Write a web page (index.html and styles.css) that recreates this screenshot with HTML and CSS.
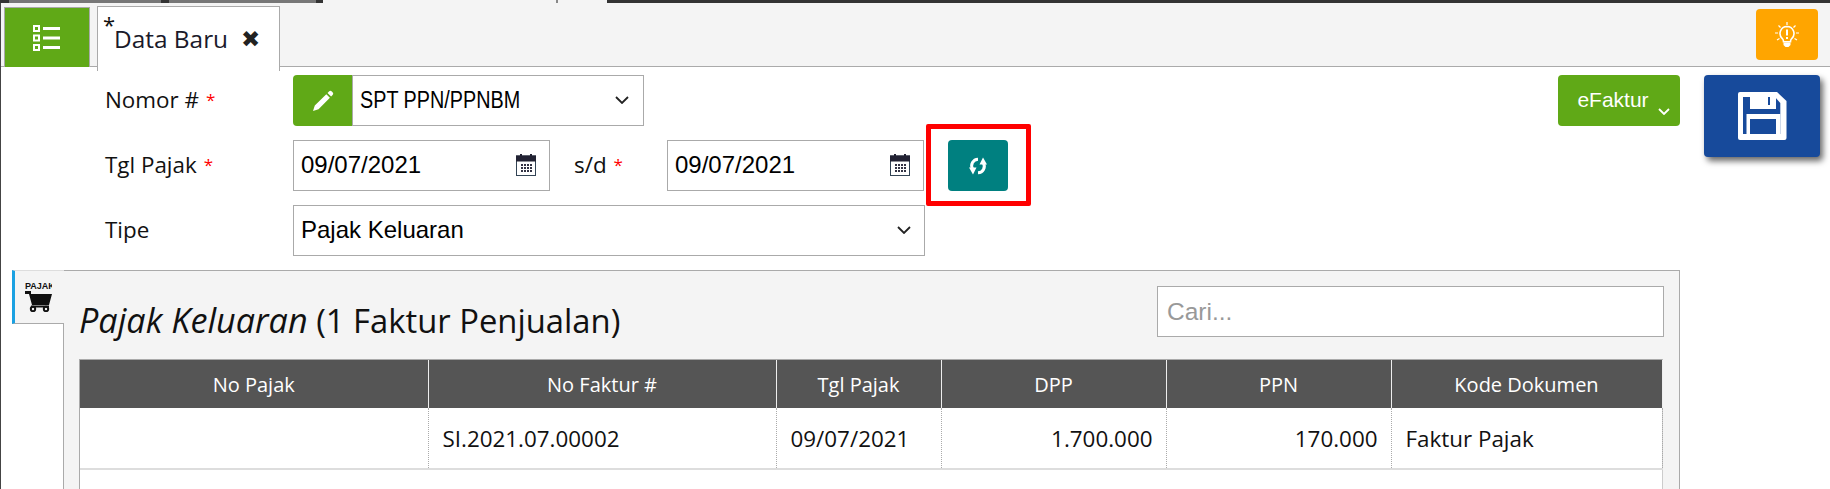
FILE: index.html
```html
<!DOCTYPE html>
<html lang="id">
<head>
<meta charset="utf-8">
<title>Data Baru</title>
<link rel="stylesheet" href="styles.css">
</head>
<body>
<div class="strip">
  <span class="seg-a"></span><span class="seg-b"></span><span class="seg-c"></span><span class="seg-d"></span><span class="seg-e"></span><span class="seg-f"></span><span class="seg-g"></span><span class="seg-h"></span>
</div>
<div class="page">
  <header class="tabbar">
    <button class="menu-btn" type="button">
      <svg class="icon-list" viewBox="0 0 28 26" width="28" height="26"><g fill="none" stroke="#fff" stroke-width="2"><rect x="1" y="1" width="5" height="5"/><rect x="1" y="10.5" width="5" height="5"/><rect x="1" y="20" width="5" height="5"/></g><g fill="#fff"><rect x="10" y="2" width="17" height="3"/><rect x="10" y="11.5" width="17" height="3"/><rect x="10" y="21" width="17" height="3"/></g></svg>
    </button>
    <div class="tab"><sup class="tab-star">*</sup><span class="tab-name">Data Baru</span><span class="tab-close">✖</span></div>
    <button class="bulb-btn" type="button">
      <svg viewBox="0 0 24 26" width="24" height="26"><g stroke="#fff" stroke-width="1.2"><path d="M12 0v3M3.500 3.500l2 2M20.500 3.500l-2 2M0 11h3M21 11h3M2 18l2.500-1.500M22 18l-2.500-1.500"/></g><path d="M12 4.500a7 7 0 0 0-4.500 12.300c.8.800 1 2 1 3h7c0-1 .2-2.200 1-3A7 7 0 0 0 12 4.500z" fill="none" stroke="#fff" stroke-width="1.600"/><path d="M8.500 20.500h7V23l-2 2h-3l-2-2z" fill="#fff"/><rect x="11" y="7.500" width="2" height="6" fill="#fff"/><rect x="11" y="15" width="2" height="2" fill="#fff"/></svg>
    </button>
  </header>
  <main class="body">
    <div class="top">
      <form class="form">
        <label class="lbl">Nomor # <em class="req">*</em></label>
        <div class="row-nomor">
          <button class="pen-btn" type="button">
            <svg viewBox="0 0 22 22" width="22" height="22"><path d="M17 1.500a2 2 0 0 1 2.800 0l.8.800a2 2 0 0 1 0 2.800l-1.500 1.500-3.600-3.600zM14.300 4.200l3.600 3.600L6.500 19.200 1 21l1.800-5.500z" fill="#fff"/></svg>
          </button>
          <div class="sel sel-nomor"><span class="condensed">SPT PPN/PPNBM</span><svg class="chev" viewBox="0 0 14 8" width="14" height="8"><path d="M1 1l6 6 6-6" fill="none" stroke="#222" stroke-width="1.800"/></svg></div>
        </div>
        <label class="lbl">Tgl Pajak <em class="req">*</em></label>
        <div class="row-date">
          <div class="date"><span>09/07/2021</span><svg class="cal" viewBox="0 0 20 22" width="20" height="22"><rect x="0.500" y="2" width="19" height="19.500" fill="#fff" stroke="#345"/><rect x="0" y="1.500" width="20" height="6" fill="#223"/><rect x="4" y="0" width="2" height="3" fill="#223"/><rect x="14" y="0" width="2" height="3" fill="#223"/><g fill="#334"><path d="M5 10h2v2H5zM8 10h2v2H8zM11 10h2v2h-2zM14 10h2v2h-2zM5 13h2v2H5zM8 13h2v2H8zM11 13h2v2h-2zM14 13h2v2h-2zM5 16h2v2H5zM8 16h2v2H8zM11 16h2v2h-2zM14 16h2v2h-2z"/></g></svg></div>
          <label class="lbl lbl-sd">s/d <em class="req">*</em></label>
          <div class="date"><span>09/07/2021</span><svg class="cal" viewBox="0 0 20 22" width="20" height="22"><rect x="0.500" y="2" width="19" height="19.500" fill="#fff" stroke="#345"/><rect x="0" y="1.500" width="20" height="6" fill="#223"/><rect x="4" y="0" width="2" height="3" fill="#223"/><rect x="14" y="0" width="2" height="3" fill="#223"/><g fill="#334"><path d="M5 10h2v2H5zM8 10h2v2H8zM11 10h2v2h-2zM14 10h2v2h-2zM5 13h2v2H5zM8 13h2v2H8zM11 13h2v2h-2zM14 13h2v2h-2zM5 16h2v2H5zM8 16h2v2H8zM11 16h2v2h-2zM14 16h2v2h-2z"/></g></svg></div>
          <button class="sync-btn" type="button">
            <svg viewBox="0 0 20 18" width="20" height="18"><g fill="none" stroke="#fff" stroke-width="3"><path d="M10 2.200A6.500 6.500 0 0 0 4.600 12"/><path d="M10 15.800A6.500 6.500 0 0 0 15.400 6"/></g><path d="M1 10.500h7.500L5 17.500z" fill="#fff"/><path d="M19 7.500h-7.500L15 .5z" fill="#fff"/></svg>
          </button>
        </div>
        <label class="lbl">Tipe</label>
        <div class="sel sel-tipe"><span>Pajak Keluaran</span><svg class="chev" viewBox="0 0 14 8" width="14" height="8"><path d="M1 1l6 6 6-6" fill="none" stroke="#222" stroke-width="1.800"/></svg></div>
      </form>
      <div class="actions">
        <button class="efaktur" type="button"><span>eFaktur</span><svg class="chev-w" viewBox="0 0 12 7" width="12" height="7"><path d="M1 1l5 5 5-5" fill="none" stroke="#fff" stroke-width="1.800"/></svg></button>
        <button class="save" type="button">
          <svg viewBox="0 0 49 48" width="49" height="48"><path d="M2 0h37l9.500 9v37a2 2 0 0 1-2 2H2a2 2 0 0 1-2-2V2a2 2 0 0 1 2-2z" fill="#fff"/><path d="M5 5h32l5.300 6v31H5z" fill="#174a9b"/><path d="M12 0h26v17H12z" fill="#fff"/><path d="M30 5h2v8h-2z" fill="#174a9b"/><path d="M8.500 22h33.800v20h-4.300V27H12v15H8.500z" fill="#fff"/></svg>
        </button>
      </div>
    </div>
    <section class="panel-wrap">
      <div class="side">
        <div class="side-tab"><span class="side-text">PAJAK</span>
          <svg viewBox="0 0 27 21" width="27" height="21"><path d="M0 0h6v3h21l-3 11H7L4 3H0z" fill="#111"/><rect x="6" y="14.500" width="18" height="2" fill="#111"/><circle cx="8" cy="18" r="2.200" fill="none" stroke="#111" stroke-width="2"/><circle cx="21" cy="18" r="2.200" fill="none" stroke="#111" stroke-width="2"/></svg>
        </div>
      </div>
      <div class="panel">
        <div class="panel-head">
          <h2 class="title"><i>Pajak Keluaran</i> (1 Faktur Penjualan)</h2>
          <div class="search">Cari...</div>
        </div>
        <div class="grid-wrap">
          <table class="grid">
            <colgroup><col class="c1"><col class="c2"><col class="c3"><col class="c4"><col class="c5"><col class="c6"></colgroup>
            <thead><tr><th>No Pajak</th><th>No Faktur #</th><th>Tgl Pajak</th><th>DPP</th><th>PPN</th><th>Kode Dokumen</th></tr></thead>
            <tbody><tr><td></td><td>SI.2021.07.00002</td><td>09/07/2021</td><td class="num">1.700.000</td><td class="num">170.000</td><td>Faktur Pajak</td></tr></tbody>
          </table>
        </div>
      </div>
    </section>
    <div class="annot"></div>
  </main>
</div>
</body>
</html>
```
FILE: styles.css
```css
* { box-sizing: border-box; }
html, body { margin: 0; height: 489px; overflow: hidden; background: #fff; }
body { font-family: "Open Sans", "Noto Sans", sans-serif; color: #111; }
button { border: 0; padding: 0; margin: 0; display: flex; align-items: center; justify-content: center; }

.strip { display: flex; height: 3px; background: #f4f4f4; }
.strip span { display: block; height: 3px; }
.seg-a { width: 9px; background: #333; }
.seg-b { width: 152px; background: #777; }
.seg-c { width: 8px; background: #333; }
.seg-d { width: 147px; background: #777; }
.seg-e { width: 7px; background: #333; }
.seg-f { width: 233px; background: #f4f4f4; }
.seg-g { width: 2px; background: #888; }
.seg-h { flex: 1; background: #333; margin-left: 49px; }

.page { height: 486px; border-left: 1px solid #444; }

.tabbar { position: relative; display: flex; height: 64px; background: #f4f4f4; border-bottom: 1px solid #aaa; padding: 4px 12px 0 3px; }
.menu-btn { width: 86px; height: 60px; background: #60a917; border: 1px solid #aaa; border-bottom: 0; }
.tab { display: flex; align-items: flex-start; width: 183px; height: 65px; margin: -1px 0 0 7px; background: #fff; border: 1px solid #aaa; border-bottom: 0; padding: 6px 0 0 5px; position: relative; font-size: 24.4px; }
.tab-star { font-size: 22px; line-height: 22px; margin: 0; width: 11px; }
.tab-name { margin-top: 10px; line-height: 32px; color: #1a1a2a; white-space: nowrap; }
.tab-close { margin: 10px 0 0 13px; line-height: 32px; font-size: 23px; font-family: "DejaVu Sans", sans-serif; color: #222; }
.bulb-btn { margin-left: auto; width: 62px; height: 51px; margin-top: 2px; background: #ffa500; border-radius: 4px; }

.body { position: relative; }
.top { display: flex; height: 203px; padding: 8px 10px 0 104px; }
.form { display: grid; grid-template-columns: 188px 1fr; grid-auto-rows: 51px; row-gap: 14px; width: 1000px; }
.lbl { display: flex; align-items: center; font-size: 22.4px; color: #111; white-space: nowrap; padding-bottom: 2px; }
.req { font-style: normal; color: #f00; margin-left: 7px; font-size: 17px; }
.row-nomor { display: flex; }
.pen-btn { width: 59px; height: 51px; background: #60a917; border-radius: 4px 0 0 4px; }
.sel, .date { display: flex; align-items: center; justify-content: space-between; height: 51px; background: #fff; border: 1px solid #aaa; font-family: "Liberation Sans", Arial, sans-serif; font-size: 24px; color: #000; padding: 0 14px 1px 7px; }
.sel-nomor { width: 292px; font-size: 23px; }
.condensed { display: inline-block; white-space: nowrap; transform: scaleX(.86); transform-origin: left center; margin-right: -26px; }
.sel-tipe { width: 632px; padding-right: 13px; }
.row-date { display: flex; align-items: stretch; }
.date { width: 257px; padding-right: 13px; }
.lbl-sd { width: 117px; padding-left: 24px; }
.sync-btn { width: 60px; height: 51px; margin-left: 24px; background: #008080; border-radius: 4px; }

.actions { display: flex; margin-left: auto; gap: 24px; align-items: flex-start; }
.efaktur { position: relative; width: 122px; height: 51px; background: #60a917; border-radius: 4px; color: #fff; font-family: "Liberation Sans", Arial, sans-serif; font-size: 21px; padding: 0 12px 2px 0; }
.chev-w { position: absolute; right: 10px; bottom: 11px; }
.save { width: 116px; height: 82px; background: #174a9b; border-radius: 4px; box-shadow: 3px 4px 6px rgba(0,0,0,.6); }

.panel-wrap { display: flex; height: 219px; padding-left: 11px; }
.side { width: 51px; flex: none; position: relative; z-index: 1; }
.side-tab { width: 52px; height: 54px; background: #f4f4f4; border-left: 3px solid #1ba1e2; border-top: 1px solid #ddd; border-bottom: 1px solid #aaa; padding: 11px 0 0 10px; display: flex; flex-direction: column; align-items: flex-start; overflow: hidden; }
.side-text { font-family: "Liberation Sans", Arial, sans-serif; font-size: 9px; font-weight: 700; line-height: 9px; width: 27px; overflow: hidden; white-space: nowrap; }
.panel { width: 1617px; background: #f4f4f4; border: 1px solid #aaa; border-bottom: 0; padding: 0 15px; }
.panel-head { display: flex; justify-content: space-between; height: 88px; }
.title { margin: 30px 0 0; font-size: 32.8px; line-height: 38px; font-weight: 400; color: #111; white-space: nowrap; }
.title i { font-size: 34.2px; }
.search { width: 507px; height: 51px; margin-top: 15px; background: #fff; border: 1px solid #aaa; padding-left: 9px; display: flex; align-items: center; font-family: "Liberation Sans", Arial, sans-serif; font-size: 24.5px; color: #999; }
.grid-wrap { background: #fff; height: 131px; border: 1px solid #aaa; border-bottom: 0; border-right: 1px solid #ccc; width: 1584px; }
.grid { border-collapse: collapse; table-layout: fixed; width: 1582px; font-size: 20px; }
.c1 { width: 348px; } .c2 { width: 348px; } .c3 { width: 165px; } .c4 { width: 225px; } .c5 { width: 225px; } .c6 { width: 271px; }
.grid th { height: 48px; background: #555; color: #fff; font-weight: 400; border-right: 1px solid #eee; padding: 0; }
.grid td { height: 61px; padding: 0 13px 0 14px; border-right: 1px dotted #aaa; border-bottom: 2px solid #ddd; color: #111; white-space: nowrap; font-size: 22.4px; }
.grid td.num { text-align: right; }

.annot { position: absolute; left: 925px; top: 57px; width: 105px; height: 82px; border: 5px solid #f00; border-radius: 2px; pointer-events: none; }
```
